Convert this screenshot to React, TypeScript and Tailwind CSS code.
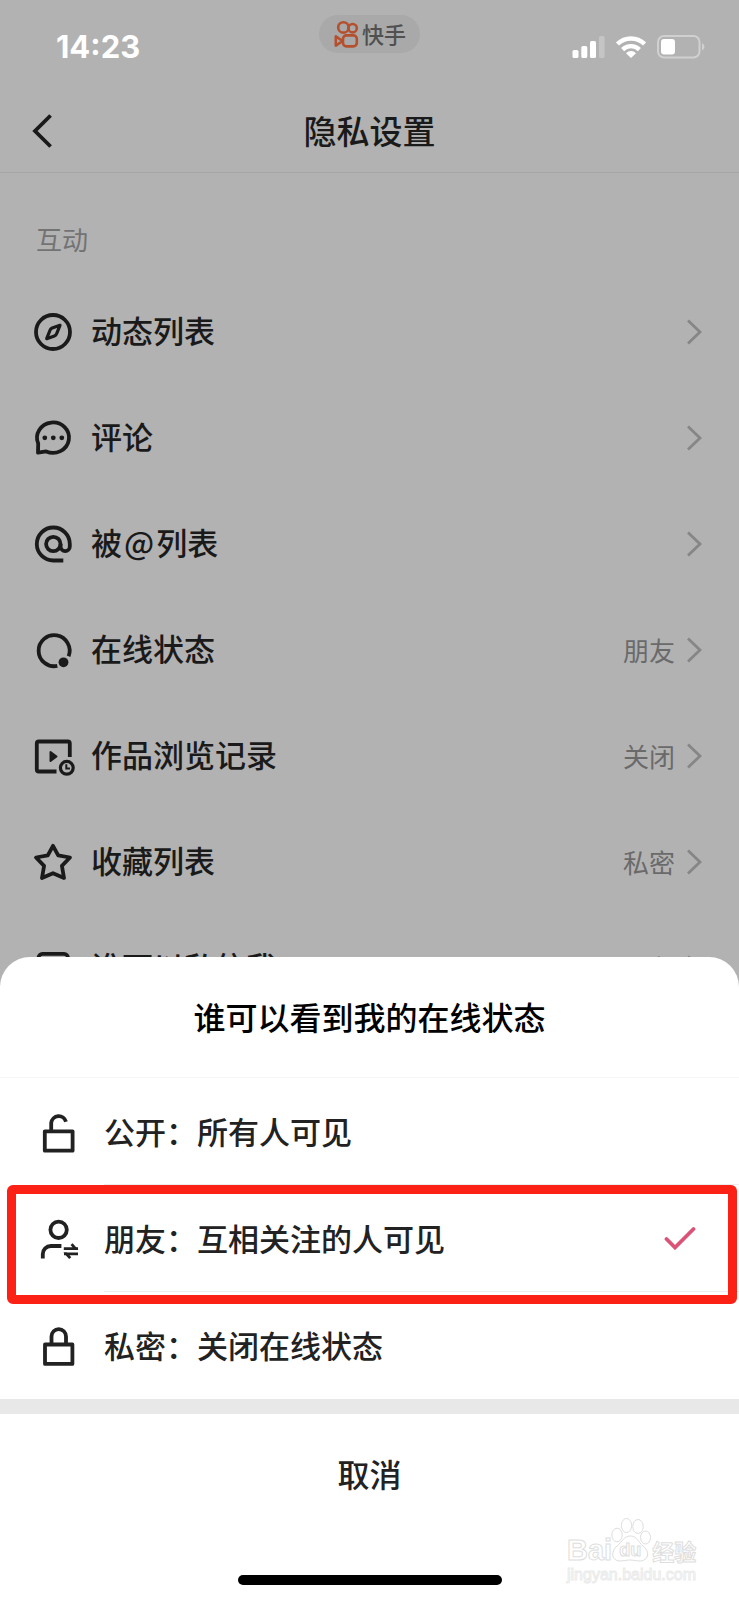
import type { ReactNode } from "react";

type IconProps = { children: ReactNode };

function Icon({ children }: IconProps) {
  return (
    <svg
      viewBox="0 0 40 40"
      className="size-10 shrink-0 overflow-visible"
      fill="none"
      stroke="currentColor"
      strokeWidth={3.8}
      aria-hidden="true"
    >
      {children}
    </svg>
  );
}

const compass = (
  <Icon>
    <circle cx="20" cy="20" r="17" />
    <path d="M27 13.3 19.2 16Q17.6 16.7 17 18.3L13.7 26.7 21.4 24Q23 23.4 23.6 21.8Z" strokeWidth={3.2} strokeLinejoin="round" />
  </Icon>
);

const comment = (
  <Icon>
    <path d="M5 34.6 5.2 25.4A16 15.2 0 1 1 13.2 33.4Z" strokeLinejoin="round" />
    <g fill="currentColor" stroke="none">
      <circle cx="11.8" cy="19.8" r="2.4" />
      <circle cx="20.3" cy="19.8" r="2.4" />
      <circle cx="28.8" cy="19.8" r="2.4" />
    </g>
  </Icon>
);

const mention = (
  <Icon>
    <circle cx="20.3" cy="20" r="7.2" />
    <path d="M30.3 36.5H20.3A16.5 16.5 0 1 1 36.8 20V22.5A4.6 4.6 0 0 1 27.6 22.5V20" />
  </Icon>
);

const online = (
  <Icon>
    <path d="M35.6 26.3A15.5 15.5 0 1 0 24.3 35.9" />
    <circle cx="30.5" cy="32.3" r="4.9" fill="currentColor" stroke="none" />
  </Icon>
);

const history = (
  <Icon>
    <path d="M36.8 21V7.5Q36.8 5.5 34.8 5.5H5.8Q3.8 5.5 3.8 7.5V33.5Q3.8 35.5 5.8 35.5H23.5" />
    <path d="M17.5 16V25L23.5 20.5Z" fill="currentColor" strokeWidth={2} strokeLinejoin="round" />
    <circle cx="33.8" cy="31.8" r="6.4" strokeWidth={3.2} />
    <path d="M33.3 28.3V32.5H37" strokeWidth={2} />
  </Icon>
);

const star = (
  <Icon>
    <path
      d="M20 3.8 25.2 13.4 37 15.5 28.9 23.8 31 36 20 31.2 9 36 11.1 23.8 3 15.5 14.8 13.4Z"
      strokeLinejoin="round"
    />
  </Icon>
);

const message = (
  <Icon>
    <rect x="5.5" y="5.8" width="29.5" height="29" rx="4" />
  </Icon>
);

const unlocked = (
  <Icon>
    <rect x="6.8" y="19.3" width="27.8" height="19.4" strokeLinejoin="round" />
    <path d="M13.2 19V11A7.6 8 0 0 1 28 9.8" />
  </Icon>
);

const locked = (
  <Icon>
    <rect x="7" y="18.5" width="27.4" height="19.4" strokeLinejoin="round" />
    <path d="M13.5 18.5V10.5A7.2 7.4 0 0 1 28 10.5V18.5" />
  </Icon>
);

const friends = (
  <Icon>
    <circle cx="20.6" cy="10.8" r="8.2" />
    <path d="M4.8 39.5V35A8 8 0 0 1 12.8 27H23.4" />
    <path d="M25.8 29.6H37.4L33.6 25.2M40 34.8H28.4L32.2 39.2" strokeWidth={2.8} />
    <path d="M37 29.6H40M26 34.8H29" strokeWidth={2.8} />
  </Icon>
);

const settings = [
  { key: "feed", label: "动态列表", icon: compass },
  { key: "comment", label: "评论", icon: comment },
  {
    key: "mention",
    label: (
      <>
        被<span className="mx-0.5">@</span>列表
      </>
    ),
    icon: mention,
  },
  { key: "online", label: "在线状态", icon: online, value: "朋友" },
  { key: "history", label: "作品浏览记录", icon: history, value: "关闭" },
  { key: "favorites", label: "收藏列表", icon: star, value: "私密" },
  { key: "message", label: "谁可以私信我", icon: message, value: "朋友" },
];

const options = [
  { label: "公开：所有人可见", icon: unlocked },
  { label: "朋友：互相关注的人可见", icon: friends, selected: true },
  { label: "私密：关闭在线状态", icon: locked },
];

function StatusBar() {
  return (
    <div className="grid h-[90px] grid-cols-3 items-start text-white">
      <time className="pt-[29px] pl-14 font-['Inter',sans-serif] text-[31px] leading-9 font-bold">14:23</time>
      <div className="mt-[15px] flex h-[38px] items-center gap-[3px] justify-self-center rounded-full bg-[#a9a9a9] px-[14px] text-[#505050]">
        <svg viewBox="0 0 26 28" className="h-7 w-[26px]" fill="none" stroke="#b5502f" strokeWidth={2.6} aria-hidden="true">
          <circle cx="10.4" cy="7.4" r="5.2" />
          <circle cx="19.6" cy="8.2" r="4.2" />
          <rect x="10" y="15.4" width="13.8" height="11" rx="3.4" />
          <path d="M2.8 16.4V25.6L9.6 21Z" strokeLinejoin="round" />
        </svg>
        <span className="pb-0.5 text-[22px] leading-8 font-medium">快手</span>
      </div>
      <div className="flex items-center gap-[11px] justify-self-end pt-[35px] pr-[34px]">
        <svg viewBox="0 0 33 24" className="h-6 w-[33px]" fill="currentColor" aria-hidden="true">
          <rect x="0.5" y="15" width="6" height="8" rx="1.6" />
          <rect x="9.3" y="11" width="6" height="12" rx="1.6" />
          <rect x="18" y="6" width="6" height="17" rx="1.6" />
          <rect x="27" y="1" width="5.6" height="22" rx="1.6" opacity="0.25" />
        </svg>
        <svg viewBox="0 0 30 24" className="h-6 w-[30px]" fill="none" stroke="currentColor" strokeWidth={4.4} aria-hidden="true">
          <path d="M1.4 9A19.5 19.5 0 0 1 28.6 9" />
          <path d="M6.6 14.6A12 12 0 0 1 23.4 14.6" />
          <path d="M15 23 10 18.2A7 7 0 0 1 20 18.2Z" fill="currentColor" stroke="none" />
        </svg>
        <svg viewBox="0 0 48 24" className="h-6 w-12" fill="none" aria-hidden="true">
          <rect x="1" y="1" width="41.5" height="21.5" rx="6" stroke="#d0d0d0" strokeWidth={2} />
          <rect x="4" y="4" width="14" height="15.5" rx="3" fill="currentColor" />
          <path d="M45 8Q47.5 9.5 47.5 11.8T45 15.6Z" fill="#d0d0d0" />
        </svg>
      </div>
    </div>
  );
}

function Watermark() {
  return (
    <div className="pointer-events-none absolute right-10 bottom-4 flex w-[132px] flex-col whitespace-nowrap text-white" aria-hidden="true">
      <div className="flex h-[54px] items-end [-webkit-text-stroke:1px_#dedede]">
        <span className="font-['Liberation_Sans',sans-serif] text-[29px] leading-8 font-bold">Bai</span>
        <div className="relative h-[50px] w-10">
          <svg viewBox="0 6 40 50" className="h-[50px] w-10 overflow-visible" fill="white" stroke="#dedede" strokeWidth={1} aria-hidden="true">
            <ellipse cx="5" cy="25" rx="5.2" ry="6.8" />
            <ellipse cx="14.5" cy="15.5" rx="5.2" ry="7" />
            <ellipse cx="26" cy="16.5" rx="5.2" ry="7" />
            <ellipse cx="33.5" cy="27.5" rx="5" ry="6.5" />
            <path d="M18.5 26C25 26 26 32 31 36 38 41 37 50 29 51 24 51 21 50 18 50S11 51 7 51C-1 50 -1 41 5 36 10 32 12 26 18.5 26Z" />
          </svg>
          <span className="absolute right-1 bottom-1 left-0 text-center font-['Liberation_Sans',sans-serif] text-[18px] leading-6 font-bold">du</span>
        </div>
        <span className="text-[22px] leading-8 font-bold">经验</span>
      </div>
      <span className="font-['Liberation_Sans',sans-serif] text-[16px] leading-[18px] [-webkit-text-stroke:1px_#ebebeb]">jingyan.baidu.com</span>
    </div>
  );
}

export default function App() {
  return (
    <div className="relative h-screen overflow-hidden bg-[#b2b2b2] font-['Noto_Sans_CJK_SC',sans-serif] text-[#1a1a1a]">
      <StatusBar />
      <header className="grid h-[83px] grid-cols-3 items-center border-b border-[#a6a6a6]">
        <button type="button" aria-label="返回" className="justify-self-start pl-8">
          <svg viewBox="0 0 21 36" className="h-9 w-[21px]" fill="none" stroke="currentColor" strokeWidth={3.8} aria-hidden="true">
            <path d="M18.6 2.5 3 18 18.6 33.5" />
          </svg>
        </button>
        <h1 className="pb-[3px] text-center text-[33px] leading-10 font-medium">隐私设置</h1>
      </header>

      <main>
        <h2 className="flex h-[106px] items-end pb-5 pl-9 text-[26px] leading-10 text-[#737373]">互动</h2>
        <ul>
          {settings.map(({ key, label, icon, value }) => (
            <li key={key}>
              <button type="button" className="flex h-[106px] w-full items-center pr-[37px] pl-[33px] text-left">
                {icon}
                <span className="ml-[18px] flex-1 pb-1 text-[31px] leading-10 font-medium">{label}</span>
                <span className="text-[26px] leading-10 text-[#6a6a6a]">{value}</span>
                <svg viewBox="0 0 16 26" className="ml-[11px] h-[26px] w-4" fill="none" stroke="#868686" strokeWidth={2.8} aria-hidden="true">
                  <path d="M2 1.5 14 13 2 24.5" />
                </svg>
              </button>
            </li>
          ))}
        </ul>
      </main>

      <section role="dialog" aria-labelledby="sheet-title" className="absolute inset-x-0 bottom-0 rounded-t-[30px] bg-white text-[#222]">
        <h2 id="sheet-title" className="flex h-[121px] items-center justify-center border-b border-[#f6f6f6] pb-[3px] text-[32px] font-medium text-black">
          谁可以看到我的在线状态
        </h2>
        <ul>
          {options.map(({ label, icon, selected }) => (
            <li key={label} className="group relative">
              <button type="button" className="flex h-[107px] w-full items-center pl-[38px] text-left">
                {icon}
                <span className="ml-[26px] flex h-full flex-1 items-center justify-between border-b border-[#ececec] pr-[43px] text-[31px] leading-10 font-medium group-last:border-transparent">
                  {label}
                  {selected && (
                    <svg viewBox="0 0 32 24" className="h-6 w-8" fill="none" stroke="#da5377" strokeWidth={3.8} strokeLinecap="round" aria-hidden="true">
                      <path d="M2.5 13 11 21.5 29.5 3" />
                    </svg>
                  )}
                </span>
              </button>
              {selected && (
                <div className="pointer-events-none absolute top-0 right-0.5 left-[7px] h-[119px] rounded-md border-9 border-[#fb2114]" />
              )}
            </li>
          ))}
        </ul>
        <div className="h-[15px] bg-[#e8e8e8]" />
        <button type="button" className="h-[122px] w-full pb-1 text-[32px] font-medium">
          取消
        </button>
        <div className="flex h-16 items-end justify-center pb-[15px]">
          <div className="h-[10px] w-[264px] rounded-full bg-black" />
        </div>
      </section>
      <Watermark />
    </div>
  );
}
